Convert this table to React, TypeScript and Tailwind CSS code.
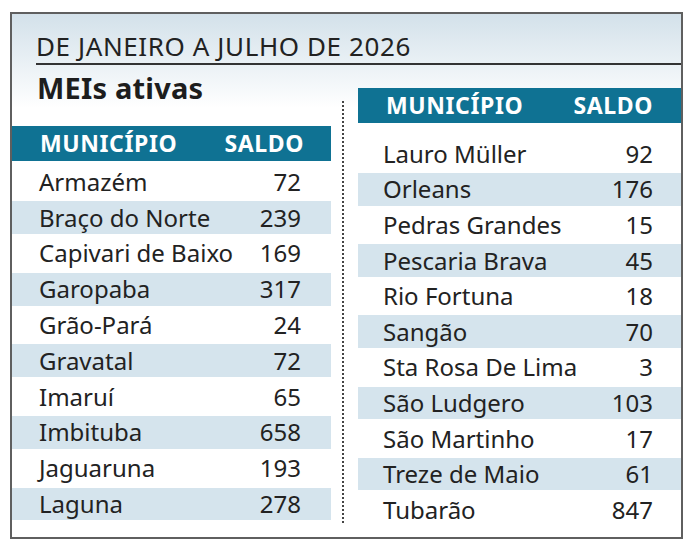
const left: [string, number][] = [
  ["Armazém", 72],
  ["Braço do Norte", 239],
  ["Capivari de Baixo", 169],
  ["Garopaba", 317],
  ["Grão-Pará", 24],
  ["Gravatal", 72],
  ["Imaruí", 65],
  ["Imbituba", 658],
  ["Jaguaruna", 193],
  ["Laguna", 278],
];

const right: [string, number][] = [
  ["Lauro Müller", 92],
  ["Orleans", 176],
  ["Pedras Grandes", 15],
  ["Pescaria Brava", 45],
  ["Rio Fortuna", 18],
  ["Sangão", 70],
  ["Sta Rosa De Lima", 3],
  ["São Ludgero", 103],
  ["São Martinho", 17],
  ["Treze de Maio", 61],
  ["Tubarão", 847],
];

const Header = ({ side }: { side: "l" | "r" }) => (
  <div
    className={
      "h-[35px] flex items-center justify-between bg-[#0f7293] text-white font-bold text-[23px] tracking-[0.6px] leading-none " +
      (side === "l" ? "pl-[28px] pr-[27px]" : "pl-[28px] pr-[28px]")
    }
  >
    <span>MUNICÍPIO</span>
    <span>SALDO</span>
  </div>
);

const Row = ({ name, value, striped, side }: { name: string; value: number; striped: boolean; side: "l" | "r" }) => (
  <div className={side === "l" ? "h-[35.8px] py-[1.5px]" : "h-[35.6px] py-[1.5px]"}>
    <div
      className={
        "h-full flex items-center justify-between text-[24px] leading-none text-[#222] " +
        (striped ? "bg-[#d5e4ed] " : "") +
        (side === "l" ? "pl-[27px] pr-[30px]" : "pl-[25px] pr-[28px]")
      }
    >
      <span>{name}</span>
      <span>{value}</span>
    </div>
  </div>
);

export default function App() {
  return (
    <div className="min-h-screen bg-white pt-[12px] pl-[10px]" style={{ fontFamily: '"Noto Sans", "Open Sans", sans-serif' }}>
      <div className="w-[673px] h-[527px] border-2 border-[#5f5f5f] bg-linear-to-b from-[#d3e1ea] to-white to-[18%] flex flex-col">
        <div className="ml-[24px] h-[51px] border-b-2 border-[#333] flex items-end pb-[4px]">
          <h2 className="text-[26px] leading-none text-[#222] tracking-[0.6px]">DE JANEIRO A JULHO DE 2026</h2>
        </div>
        <div className="flex">
          <div className="w-[319px]">
            <h1 className="pl-[25px] pt-[8px] h-[61px] text-[29px] leading-none font-bold text-[#1d1d1d] tracking-[0.2px]">
              MEIs ativas
            </h1>
            <Header side="l" />
            <div className="pt-[3px]">
              {left.map(([n, v], i) => (
                <Row key={n} name={n} value={v} striped={i % 2 === 1} side="l" />
              ))}
            </div>
          </div>
          <div className="ml-[11px] mt-[36px] h-[422px] border-l-2 border-dotted border-[#444]" />
          <div className="flex-1 ml-[14px] mt-[23px]">
            <Header side="r" />
            <div className="pt-[13px]">
              {right.map(([n, v], i) => (
                <Row key={n} name={n} value={v} striped={i % 2 === 1} side="r" />
              ))}
            </div>
          </div>
        </div>
      </div>
    </div>
  );
}
